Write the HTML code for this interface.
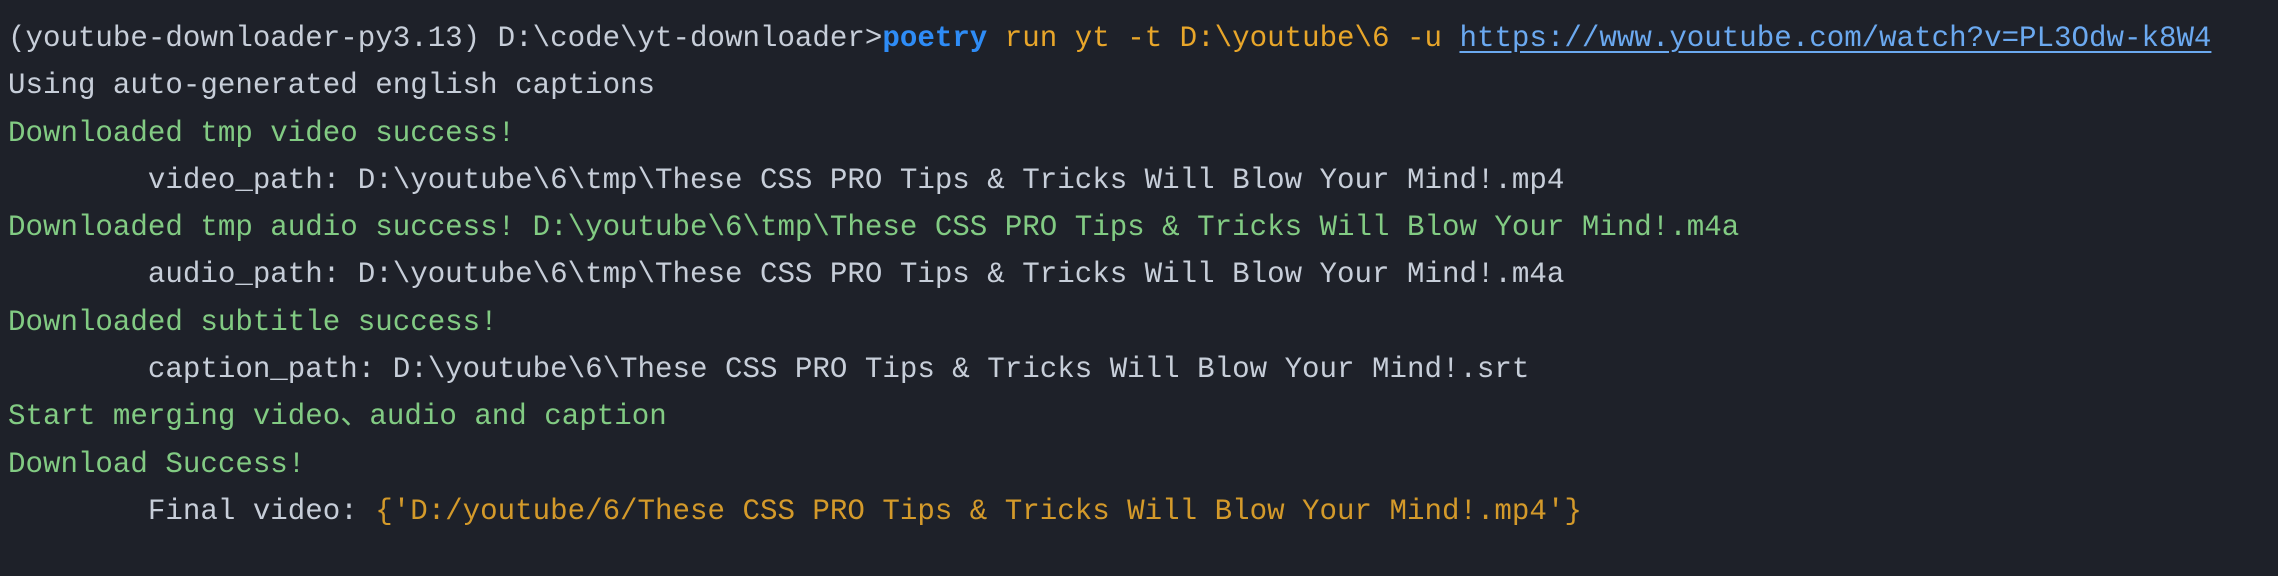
<!DOCTYPE html>
<html><head><meta charset="utf-8"><style>
html,body{margin:0;padding:0;background:#1e2129;width:2278px;height:576px;overflow:hidden}
pre{margin:0;padding:15px 0 0 8px;font-family:"Liberation Mono","Noto Sans CJK SC",monospace;font-size:29.15px;line-height:47.3px;color:#c7ced9;white-space:pre}
.g{color:#82cb83}.o{color:#e8a62a}.b{color:#2e8cf6;font-weight:bold}.u{color:#6ba9f0;text-decoration:underline;text-underline-offset:5px}.y{color:#d49a2a}
</style></head><body><pre>(youtube-downloader-py3.13) D:\code\yt-downloader&gt;<span class="b">poetry</span><span class="o"> run yt -t D:\youtube\6 -u </span><span class="u">https://www.youtube.com/watch?v=PL3Odw-k8W4</span>
Using auto-generated english captions
<span class="g">Downloaded tmp video success!</span>
        video_path: D:\youtube\6\tmp\These CSS PRO Tips &amp; Tricks Will Blow Your Mind!.mp4
<span class="g">Downloaded tmp audio success! D:\youtube\6\tmp\These CSS PRO Tips &amp; Tricks Will Blow Your Mind!.m4a</span>
        audio_path: D:\youtube\6\tmp\These CSS PRO Tips &amp; Tricks Will Blow Your Mind!.m4a
<span class="g">Downloaded subtitle success!</span>
        caption_path: D:\youtube\6\These CSS PRO Tips &amp; Tricks Will Blow Your Mind!.srt
<span class="g">Start merging video、audio and caption</span>
<span class="g">Download Success!</span>
        Final video: <span class="y">{'D:/youtube/6/These CSS PRO Tips &amp; Tricks Will Blow Your Mind!.mp4'}</span>
</pre></body></html>
